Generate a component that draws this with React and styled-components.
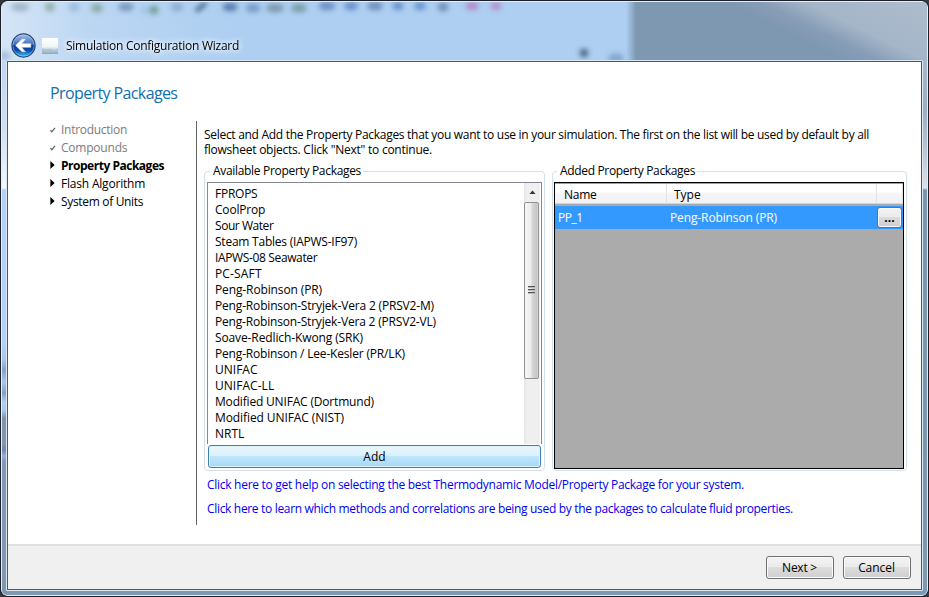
import React from 'react';
import styled, { createGlobalStyle } from 'styled-components';

const GlobalStyle = createGlobalStyle`
  * { box-sizing: border-box; }
  body { margin: 0; background: #3a3a3c; overflow: hidden; }
  button { font: inherit; color: inherit; padding: 0; }
`;

const Label = styled.span`
  letter-spacing: ${(p) => p.$track || 0}px;
  white-space: pre;
`;

const Frame = styled.div`
  width: 929px;
  height: 597px;
  border: 1px solid #1c2029;
  border-radius: 7px;
  overflow: hidden;
  background: #1c2029;
  font: 12px/15px "Open Sans", "Noto Sans", sans-serif;
  color: #000;
`;

const Glass = styled.div`
  position: relative;
  height: 595px;
  border: 1px solid #e3eefa;
  border-radius: 6px;
  overflow: hidden;
  display: grid;
  grid-template: 58px 531px 4px / 4px 917px 4px;
  background: #7f98b2;
`;

const TitleBar = styled.header`
  grid-column: 1 / -1;
  position: relative;
  display: flex;
  align-items: center;
  padding: 28px 0 0 9px;
  background:
    linear-gradient(90deg, rgba(225, 236, 248, 0.75) 0, rgba(200, 221, 244, 0.5) 90px, rgba(174, 207, 241, 0) 230px) 0 0 / 625px 100% no-repeat,
    linear-gradient(90deg, #aecff1 0, #aecff1 624px, #7f98b2 634px, rgba(127, 152, 178, 0) 635px),
    linear-gradient(26deg, #7f98b2 0, #7f98b2 51%, #879cb7 59%, #a4b5c8 70%, #aebdcd 100%) 634px 0 / 291px 100% no-repeat;
`;

const Backdrop = styled.svg`
  position: absolute;
  left: 0;
  top: 0;
`;

const BackButton = styled.button`
  position: relative;
  width: 25px;
  height: 25px;
  border: 0;
  background: none;
  svg { display: block; }
`;

const WindowIcon = styled.svg`
  position: relative;
  margin: 1px 0 0 6px;
`;

const WindowTitle = styled.div`
  position: relative;
  margin: 1px 0 0 8px;
  text-shadow: 0 0 5px #fff, 0 0 8px rgba(255, 255, 255, 0.8), 0 0 10px rgba(255, 255, 255, 0.6);
`;

const LeftEdge = styled.div`
  background: linear-gradient(180deg, #c3d9f0 0, #bdd7f5 10px, #cfe1f7 70px, #f3f7fc 128px, #b3d2f6 130px, #b1d1f7 285px, #a9c6e8 300px, #86a2c5 310px, #a9c7ea 322px, #84a0c0 333px, #b0cef0 342px, #abc9ec 350px, #7f93af 358px, #8296ae 384px, #7388a5 390px, #93b0d6 396px, #8097b3 402px, #7f98b2 100%);
`;

const RightEdge = styled.div`
  background: linear-gradient(180deg, #a9bacd 0, #9aaec4 50px, #b9c6d5 90px, #dae0e8 128px, #7b95b0 130px, #7f98b2 100%);
`;

const Client = styled.div`
  border: 1px solid #dce8f3;
  border-radius: 1px;
`;

const ClientInner = styled.div`
  height: 529px;
  border: 1px solid #4b5667;
  background: #fff;
  display: flex;
  flex-direction: column;
`;

const Page = styled.main`
  height: 482px;
  padding: 20px 14px 0 42px;
`;

const Heading = styled.h1`
  margin: 0 0 17px;
  height: 22px;
  font-size: 16px;
  line-height: 22px;
  font-weight: 400;
  color: #1170b0;
`;

const Columns = styled.div`
  display: flex;
`;

const Steps = styled.nav`
  width: 147px;
  height: 404px;
  border-right: 1px solid #666;
`;

const Step = styled.div`
  display: flex;
  align-items: center;
  height: 18px;
  padding-bottom: 2px;
  color: ${(p) => (p.$done ? '#7b7b7b' : '#000')};
  font-weight: ${(p) => (p.$current ? 700 : 400)};
  svg { width: 7px; height: 9px; margin: 1px 4px 0 0; flex: none; }
`;

const Detail = styled.section`
  margin-left: 7px;
  padding-top: 6px;
`;

const Intro = styled.p`
  margin: 0;
  height: 44px;
  display: flex;
  flex-direction: column;
`;

const Groups = styled.div`
  display: flex;
  gap: 7px;
`;

const Group = styled.div`
  width: ${(p) => p.$width}px;
  height: 300px;
  border: 1px solid #d5dfe9;
  border-radius: 4px;
  padding: 0 2px;
`;

const Legend = styled.div`
  width: max-content;
  height: 15px;
  margin: -9px 0 4px ${(p) => p.$indent}px;
  padding: 0 2px 0 3px;
  background: #fff;
`;

const ListBox = styled.div`
  width: 335px;
  height: 262px;
  border: 1px solid #828790;
  border-bottom: 0;
  display: flex;
  justify-content: space-between;
`;

const Items = styled.div`
  padding: 3px 0 0 7px;
  line-height: 16px;
`;

const Item = styled.div`
  height: 16px;
`;

const ScrollBar = styled.div`
  width: 17px;
  display: flex;
  flex-direction: column;
  align-items: flex-start;
  background: linear-gradient(90deg, #e4e4e4 0, #efefef 3px, #f0f0f0 14px, #e8e8e8 15px, #fff 16px);
`;

const ScrollArrow = styled.div`
  width: 16px;
  height: 19px;
  display: flex;
  justify-content: center;
  padding-top: 7px;
`;

const Thumb = styled.div`
  width: 15px;
  height: 177px;
  border: 1px solid #929292;
  border-radius: 2px;
  display: flex;
  align-items: center;
  justify-content: center;
  padding-bottom: 2px;
  background: linear-gradient(90deg, #f7f7f7 0, #ececec 6px, #d8d8da 7px, #c5c5c9 12px, #dedede 13px);
`;

const AddButton = styled.button`
  display: flex;
  align-items: center;
  justify-content: center;
  width: 333px;
  height: 23px;
  margin: 1px 0 0 1px;
  border: 1px solid #3c7fb1;
  border-radius: 3px;
  box-shadow: inset 0 0 0 1px #def4fc;
  background: linear-gradient(180deg, #eaf6fd 0, #d9f0fc 49%, #bee6fd 50%, #a7d9f5 100%);
`;

const DataGrid = styled.div`
  width: 350px;
  height: 287px;
  margin-left: -1px;
  border: 1px solid #000;
  background: #ababab;
`;

const HeaderRow = styled.div`
  display: grid;
  grid-template-columns: 112px 210px 26px;
  height: 23px;
  border-top: 1px solid #a0a0a0;
  border-bottom: 2px solid #a5aab0;
  background: #fff;
`;

const HeaderCell = styled.div`
  display: flex;
  align-items: center;
  padding: 2px 0 0 ${(p) => p.$inset || 0}px;
  border-right: 1px solid #dfe1e3;
  border-bottom: 1px solid #d5d5d5;
  background: linear-gradient(180deg, #fff 0, #fff 8px, #f5f6f8 9px, #f0f2f4 100%);
`;

const DataRow = styled.div`
  display: grid;
  grid-template-columns: 115px 207px 25px;
  align-items: center;
  height: 23px;
  background: #3399ff;
  color: #fff;
`;

const Cell = styled.div`
  padding-left: ${(p) => p.$inset || 0}px;
`;

const MoreButton = styled.button`
  width: 25px;
  height: 21px;
  border: 1px solid #707070;
  border-radius: 3px;
  box-shadow: inset 0 0 0 1px #f8f8f8;
  background: linear-gradient(180deg, #f2f2f2 0, #ebebeb 48%, #dadada 50%, #cfcfcf 100%);
  color: #000;
  font-weight: 700;
  line-height: 17px;
`;

const Links = styled.div`
  display: flex;
  flex-direction: column;
  gap: 9px;
  padding: 6px 0 0 3px;
`;

const HelpLink = styled.a`
  color: #0000f0;
`;

const Footer = styled.footer`
  height: 45px;
  border-top: 2px solid #dfdfdf;
  background: #f0f0f0;
  display: flex;
  justify-content: flex-end;
  gap: 9px;
  padding: 10px 10px 0 0;
`;

const FooterButton = styled.button`
  width: 68px;
  height: 23px;
  border: 1px solid #707070;
  border-radius: 3px;
  box-shadow: inset 0 0 0 1px #fafafa;
  background: linear-gradient(180deg, #f3f3f3 0, #ebebeb 49%, #dddddd 50%, #cfcfcf 100%);
  display: flex;
  align-items: center;
  justify-content: center;
  padding-right: 1px;
`;

const Check = () => (
  <svg viewBox="0 0 7 9"><path d="M0.4 5.2 1.9 6.8 5 2.8" fill="none" stroke="#666" strokeWidth="1.3" /></svg>
);
const Arrow = () => (
  <svg viewBox="0 0 7 9"><path d="M0.4 0V8L4.6 4Z" fill="#000" /></svg>
);

const STEPS = [
  { text: 'Introduction', track: -0.28, done: true },
  { text: 'Compounds', track: -0.22, done: true },
  { text: 'Property Packages', track: -0.48, current: true },
  { text: 'Flash Algorithm', track: -0.2 },
  { text: 'System of Units', track: -0.33 },
];

const PACKAGES = [
  ['FPROPS', -0.25],
  ['CoolProp', -0.2],
  ['Sour Water', -0.45],
  ['Steam Tables (IAPWS-IF97)', -0.23],
  ['IAPWS-08 Seawater', -0.36],
  ['PC-SAFT', 0.15],
  ['Peng-Robinson (PR)', -0.12],
  ['Peng-Robinson-Stryjek-Vera 2 (PRSV2-M)', -0.17],
  ['Peng-Robinson-Stryjek-Vera 2 (PRSV2-VL)', -0.182],
  ['Soave-Redlich-Kwong (SRK)', -0.115],
  ['Peng-Robinson / Lee-Kesler (PR/LK)', -0.175],
  ['UNIFAC', 0],
  ['UNIFAC-LL', 0.04],
  ['Modified UNIFAC (Dortmund)', -0.178],
  ['Modified UNIFAC (NIST)', -0.09],
  ['NRTL', 0],
];

const SMUDGES = [
  [18, 5, 18, '#8293a8', 0.55], [48, 5, 10, '#7a9a80', 0.65], [72, 5, 11, '#7a9fd0', 0.5],
  [95, 6, 12, '#7d9f88', 0.75], [124, 5, 16, '#6785ab', 0.7], [144, 8, 11, '#98bde0', 0.6],
  [152, 8, 9, '#5e9681', 0.8], [175, 5, 13, '#7896bf', 0.6], [228, 5, 15, '#5479ab', 0.9],
  [251, 6, 15, '#6d91c1', 0.8], [273, 6, 18, '#71899e', 0.75], [297, 6, 16, '#6e9092', 0.75],
  [325, 4, 17, '#6688bd', 0.85], [349, 4, 14, '#6288c8', 0.85], [373, 4, 16, '#6887b5', 0.85],
  [396, 4, 11, '#5f88cb', 0.85], [418, 4, 12, '#5e89ca', 0.8], [441, 5, 11, '#6886b2', 0.85],
  [470, 4, 13, '#b284c5', 0.85], [494, 4, 11, '#b488c9', 0.85],
  [582, 51, 9, '#40566f', 0.8], [614, 56, 16, '#6f94bb', 0.7], [2, 54, 14, '#7f9cc0', 0.5],
];

export default function App() {
  return (
    <Frame>
      <GlobalStyle />
      <Glass>
        <TitleBar>
          <Backdrop width="925" height="58" aria-hidden="true">
            <defs>
              <filter id="soft" x="-60%" y="-100%" width="220%" height="300%"><feGaussianBlur stdDeviation="2.8" /></filter>
            </defs>
            <g filter="url(#soft)">
              {SMUDGES.map(([x, y, w, color, opacity]) => (
                <ellipse key={x} cx={x} cy={y} rx={w / 2} ry="4.5" fill={color} opacity={opacity} />
              ))}
              <path d="M194 9 204 1" stroke="#49698f" strokeWidth="5" opacity="0.9" />
            </g>
          </Backdrop>
          <BackButton aria-label="Back">
            <svg width="25" height="25" viewBox="0 0 25 25">
              <defs>
                <linearGradient id="orb" x1="0" y1="0" x2="0" y2="1">
                  <stop offset="0" stopColor="#a9c3e8" />
                  <stop offset="0.46" stopColor="#3a6dbd" />
                  <stop offset="0.5" stopColor="#0c3b98" />
                  <stop offset="0.72" stopColor="#0b4fae" />
                  <stop offset="1" stopColor="#3fd0fb" />
                </linearGradient>
              </defs>
              <circle cx="12.5" cy="12.5" r="11.6" fill="url(#orb)" stroke="#263f72" strokeWidth="1.1" />
              <circle cx="12.5" cy="12.5" r="10.6" fill="none" stroke="#c4dcf5" strokeWidth="0.7" opacity="0.6" />
              <path d="M4.6 12.5 11 6.2H14.4L10.6 10.7H19.8V14.3H10.6L14.4 18.8H11Z" fill="#fff" stroke="#e8eef8" strokeWidth="0.5" strokeLinejoin="round" />
            </svg>
          </BackButton>
          <WindowIcon width="16" height="16" viewBox="0 0 16 16">
            <defs>
              <linearGradient id="sky" x1="0" y1="0" x2="0" y2="1">
                <stop offset="0" stopColor="#fff" />
                <stop offset="0.55" stopColor="#f0f4f7" />
                <stop offset="0.72" stopColor="#c3d3df" />
                <stop offset="1" stopColor="#85a9c4" />
              </linearGradient>
            </defs>
            <rect width="16" height="16" fill="url(#sky)" />
            <path d="M0 10Q3 12 6 11T11 12T16 10V12Q12 14 8 13T0 13Z" fill="#a9bdcb" opacity="0.6" />
          </WindowIcon>
          <WindowTitle><Label $track={-0.26}>Simulation Configuration Wizard</Label></WindowTitle>
        </TitleBar>
        <LeftEdge />
        <Client>
          <ClientInner>
            <Page>
              <Heading><Label $track={-0.61}>Property Packages</Label></Heading>
              <Columns>
                <Steps>
                  {STEPS.map((s) => (
                    <Step key={s.text} $done={s.done} $current={s.current}>
                      {s.done ? <Check /> : <Arrow />}
                      <Label $track={s.track}>{s.text}</Label>
                    </Step>
                  ))}
                </Steps>
                <Detail>
                  <Intro>
                    <Label $track={-0.295}>Select and Add the Property Packages that you want to use in your simulation. The first on the list will be used by default by all</Label>
                    <Label $track={-0.24}>flowsheet objects. Click "Next" to continue.</Label>
                  </Intro>
                  <Groups>
                    <Group $width={341}>
                      <Legend $indent={3}><Label $track={-0.315}>Available Property Packages</Label></Legend>
                      <ListBox>
                        <Items>
                          {PACKAGES.map(([name, track]) => (
                            <Item key={name}><Label $track={track}>{name}</Label></Item>
                          ))}
                        </Items>
                        <ScrollBar>
                          <ScrollArrow>
                            <svg width="7" height="4" viewBox="0 0 7 4"><path d="M0.5 4 3.5 0.5 6.5 4Z" fill="#333" /></svg>
                          </ScrollArrow>
                          <Thumb>
                            <svg width="7" height="8" viewBox="0 0 7 8" shapeRendering="crispEdges">
                              <path d="M0 0.5H7M0 3.5H7M0 6.5H7" stroke="#555" />
                              <path d="M0 1.5H7M0 4.5H7M0 7.5H7" stroke="#bbb" />
                            </svg>
                          </Thumb>
                        </ScrollBar>
                      </ListBox>
                      <AddButton><Label $track={0.1}>Add</Label></AddButton>
                    </Group>
                    <Group $width={355}>
                      <Legend $indent={2}><Label $track={-0.335}>Added Property Packages</Label></Legend>
                      <DataGrid>
                        <HeaderRow>
                          <HeaderCell $inset={9}><Label $track={-0.25}>Name</Label></HeaderCell>
                          <HeaderCell $inset={7}><Label>Type</Label></HeaderCell>
                          <HeaderCell />
                        </HeaderRow>
                        <DataRow>
                          <Cell $inset={3}><Label $track={-0.45}>PP_1</Label></Cell>
                          <Cell><Label $track={-0.12}>Peng-Robinson (PR)</Label></Cell>
                          <MoreButton>...</MoreButton>
                        </DataRow>
                      </DataGrid>
                    </Group>
                  </Groups>
                  <Links>
                    <HelpLink><Label $track={-0.28}>Click here to get help on selecting the best Thermodynamic Model/Property Package for your system.</Label></HelpLink>
                    <HelpLink><Label $track={-0.324}>Click here to learn which methods and correlations are being used by the packages to calculate fluid properties.</Label></HelpLink>
                  </Links>
                </Detail>
              </Columns>
            </Page>
            <Footer>
              <FooterButton><Label $track={-0.25}>Next &gt;</Label></FooterButton>
              <FooterButton><Label $track={-0.06}>Cancel</Label></FooterButton>
            </Footer>
          </ClientInner>
        </Client>
        <RightEdge />
      </Glass>
    </Frame>
  );
}
